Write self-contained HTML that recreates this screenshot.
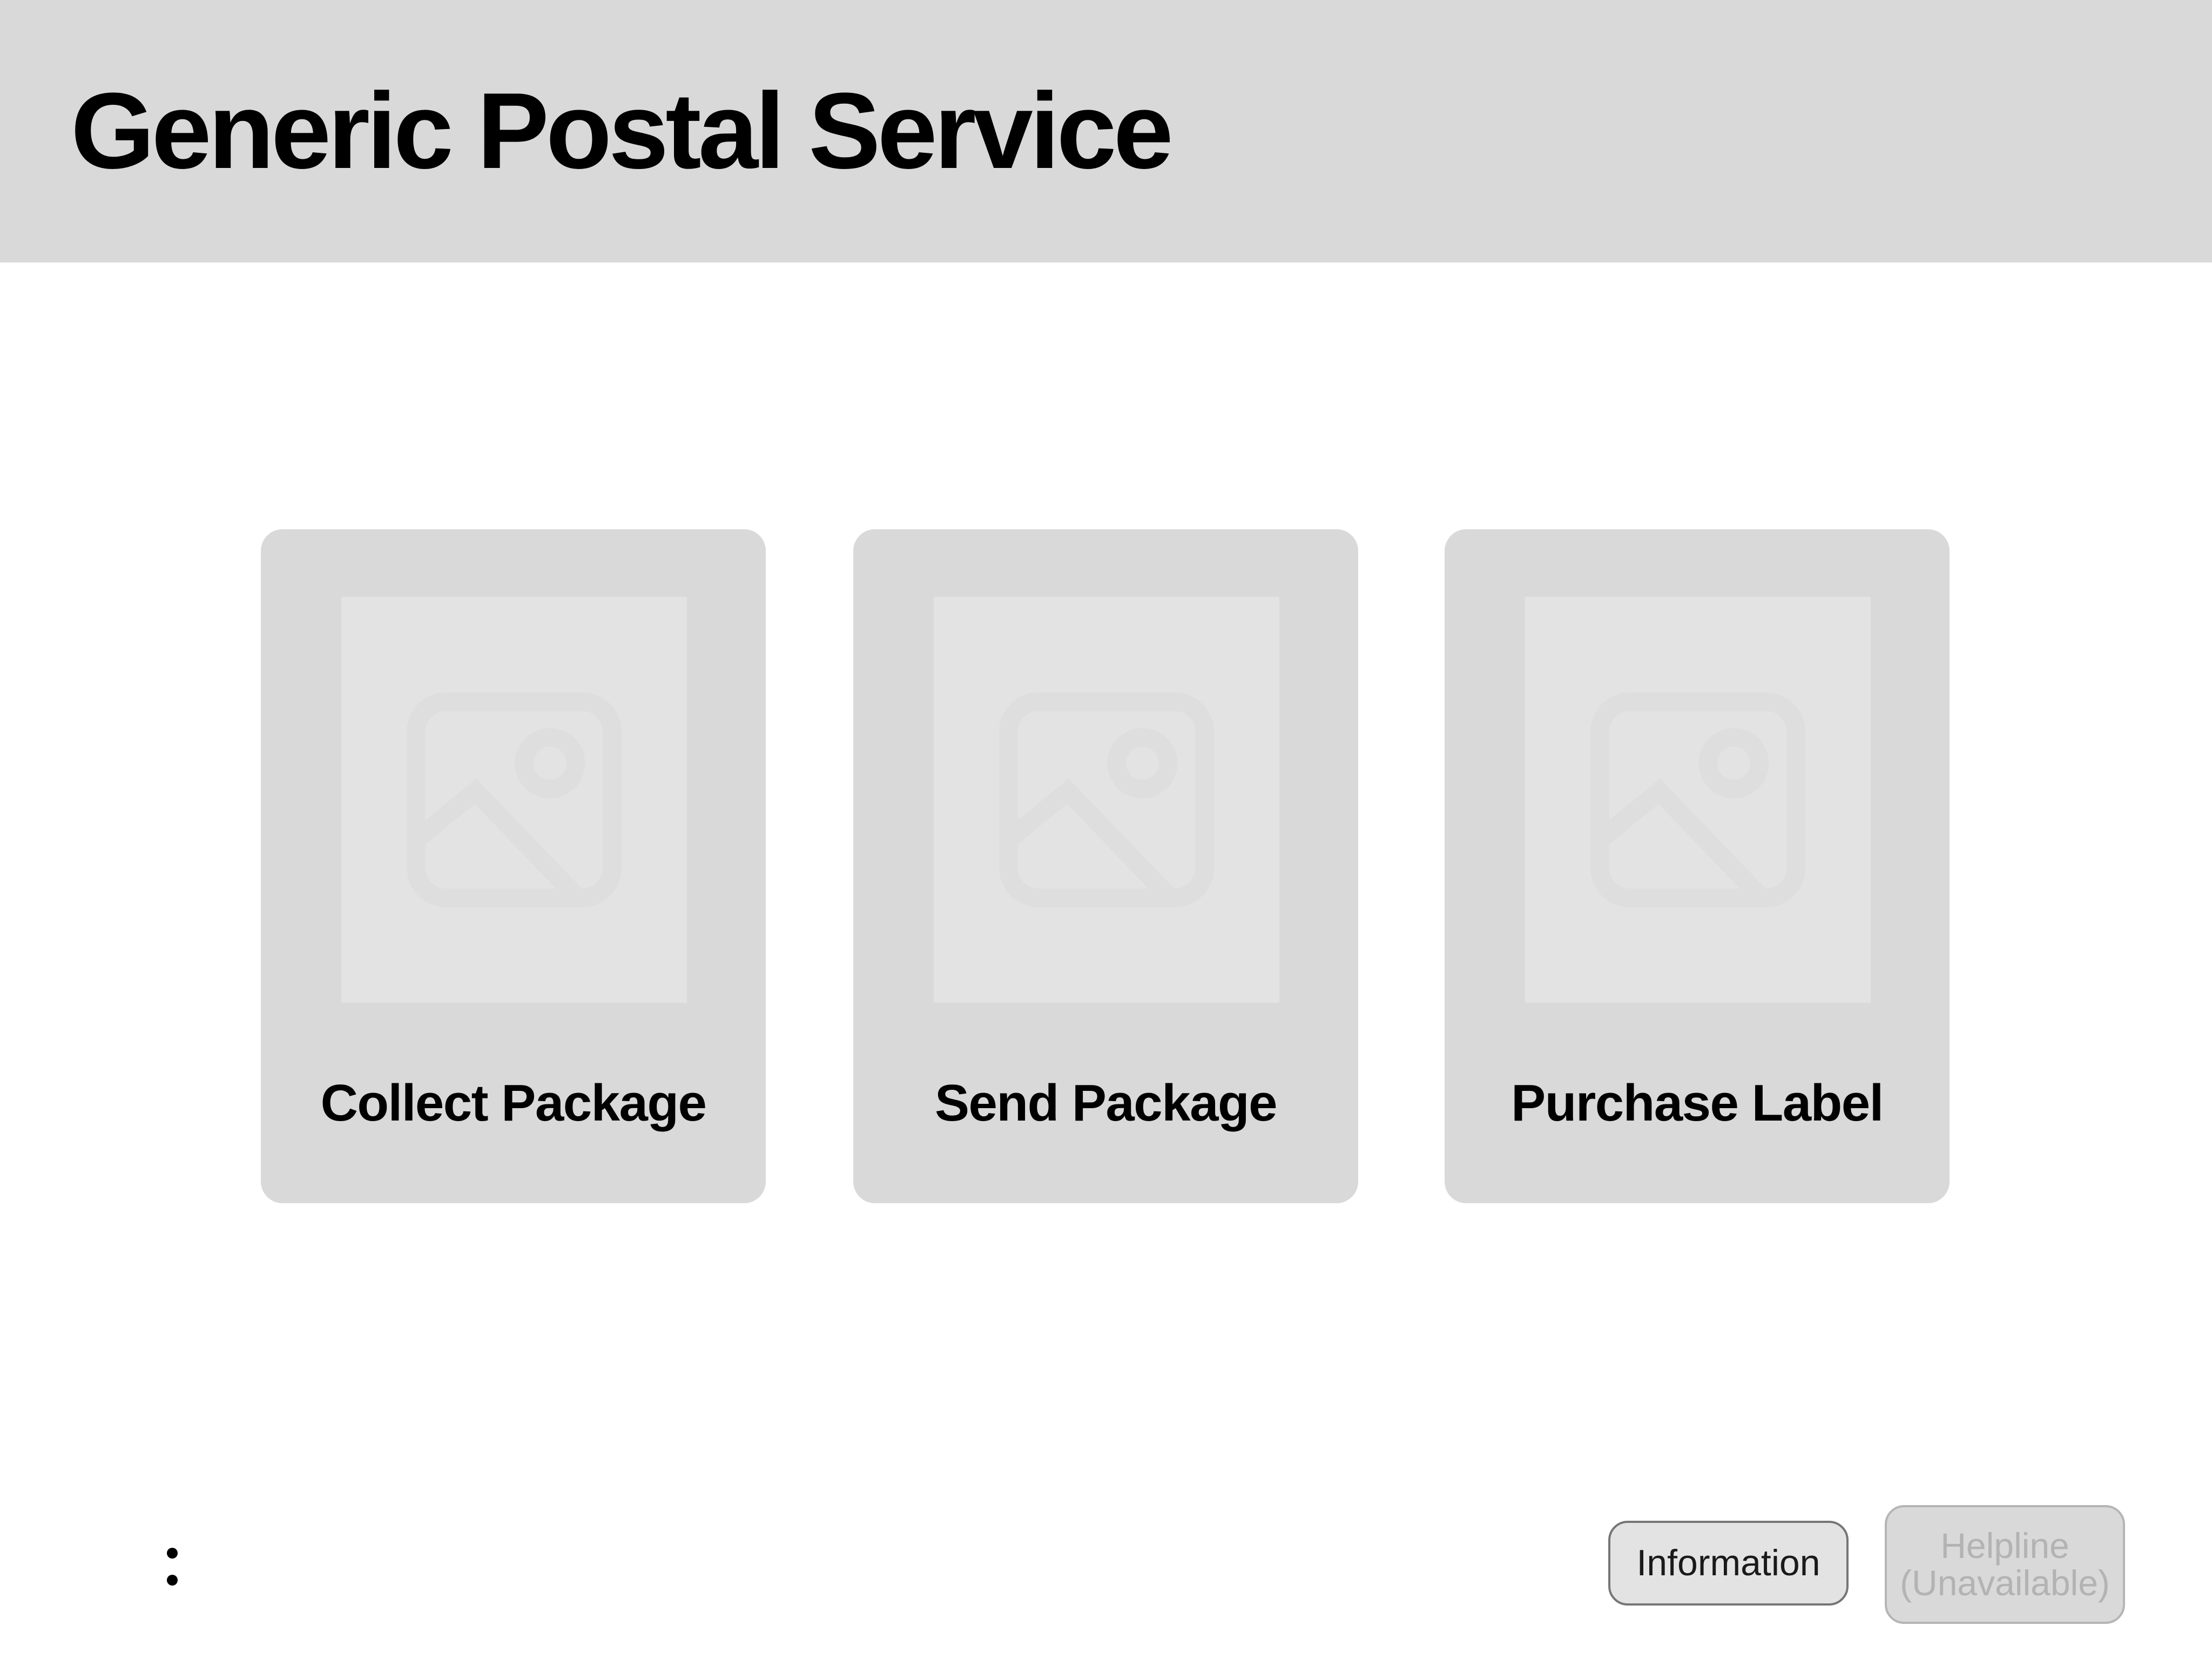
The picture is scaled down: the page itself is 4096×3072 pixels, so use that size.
<!DOCTYPE html>
<html><head><meta charset="utf-8"><style>
*{margin:0;padding:0;box-sizing:border-box}
body{width:4096px;height:3072px;background:#fff;position:relative;overflow:hidden;font-family:"Liberation Sans",sans-serif}
.hdr{position:absolute;left:0;top:0;width:4096px;height:486px;background:#d9d9d9}
.title{position:absolute;left:131px;top:143px;font-size:200px;font-weight:bold;letter-spacing:-6px;color:#000;white-space:nowrap;line-height:1}
.card{position:absolute;top:980px;width:935px;height:1248px;background:#d9d9d9;border-radius:40px}
.img{position:absolute;left:149px;top:125px;width:640px;height:752px;background:#e3e3e3}
.img svg{position:absolute;left:121px;top:177px;width:398px;height:398px}
.lbl{position:absolute;left:0;width:100%;top:1015px;text-align:center;font-size:96px;font-weight:bold;letter-spacing:-1.5px;line-height:1;color:#000}
.btn{position:absolute;border-radius:36px;text-align:center;display:flex;align-items:center;justify-content:center;line-height:1.05}
.dot{position:absolute;left:309px;width:20px;height:20px;border-radius:50%;background:#000}
</style></head><body>
<div class="hdr"><div class="title">Generic Postal Service</div></div>

<div class="card" style="left:483px"><div class="img"><svg viewBox="0 0 100 100" fill="none" stroke="#dedede" stroke-width="8.7"><rect x="4.35" y="4.35" width="91.3" height="91.3" rx="14"/><circle cx="66.7" cy="33" r="12"/><path d="M4 69 L32 46 L80 96"/></svg></div><div class="lbl">Collect Package</div></div>
<div class="card" style="left:1580px"><div class="img"><svg viewBox="0 0 100 100" fill="none" stroke="#dedede" stroke-width="8.7"><rect x="4.35" y="4.35" width="91.3" height="91.3" rx="14"/><circle cx="66.7" cy="33" r="12"/><path d="M4 69 L32 46 L80 96"/></svg></div><div class="lbl">Send Package</div></div>
<div class="card" style="left:2675px"><div class="img"><svg viewBox="0 0 100 100" fill="none" stroke="#dedede" stroke-width="8.7"><rect x="4.35" y="4.35" width="91.3" height="91.3" rx="14"/><circle cx="66.7" cy="33" r="12"/><path d="M4 69 L32 46 L80 96"/></svg></div><div class="lbl">Purchase Label</div></div>

<div class="dot" style="top:2866px"></div>
<div class="dot" style="top:2916px"></div>

<div class="btn" style="left:2978px;top:2816px;width:445px;height:157px;background:#e3e3e3;border:4px solid #767676;font-size:68px;color:#1a1a1a">Information</div>
<div class="btn" style="left:3490px;top:2787px;width:445px;height:220px;background:#d9d9d9;border:4px solid #b5b5b5;font-size:66px;color:#b3b3b3">Helpline<br>(Unavailable)</div>
</body></html>
